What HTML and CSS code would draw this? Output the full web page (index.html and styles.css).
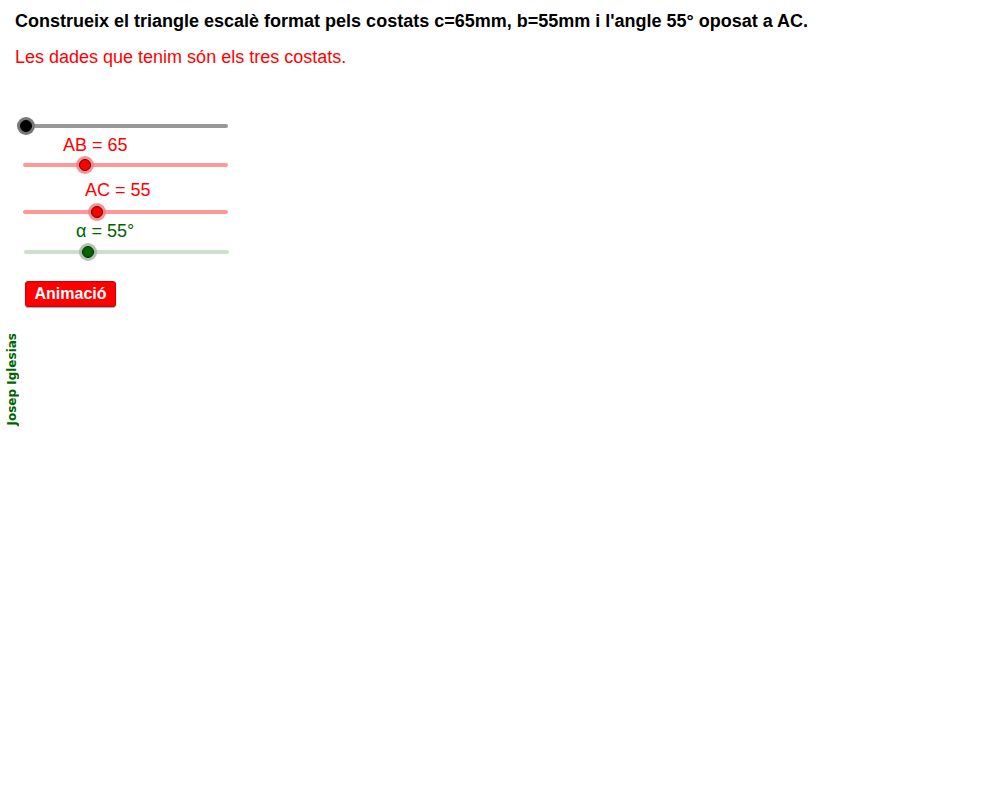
FILE: index.html
```html
<!DOCTYPE html>
<html>
<head>
<meta charset="utf-8">
<link rel="stylesheet" href="styles.css">
</head>
<body>
<div class="applet">
  <div class="title">Construeix el triangle escalè format pels costats c=65mm, b=55mm i l'angle 55° oposat a AC.</div>
  <div class="subtitle">Les dades que tenim són els tres costats.</div>

  <div class="sliders">
    <div class="track track-black t1"><span class="knob knob-black" style="left:0px"></span></div>
    <div class="label red l-ab">AB = 65</div>
    <div class="track track-red t2"><span class="knob knob-red" style="left:62px"></span></div>
    <div class="label red l-ac">AC = 55</div>
    <div class="track track-red t3"><span class="knob knob-red" style="left:74px"></span></div>
    <div class="label green l-alpha">α = 55°</div>
    <div class="track track-green t4"><span class="knob knob-green" style="left:64px"></span></div>
    <button class="anim">Animació</button>
    <div class="author">Josep Iglesias</div>
  </div>
</div>
</body>
</html>
```

FILE: styles.css
```css
html, body {
  margin: 0;
  padding: 0;
  background: #ffffff;
}
.applet {
  width: 1007px;
  height: 787px;
  font-family: "Liberation Sans", Arial, sans-serif;
}
.title {
  padding: 11px 0 0 15px;
  font-size: 18px;
  font-weight: bold;
  line-height: 20px;
  color: #000;
  white-space: nowrap;
}
.subtitle {
  margin-top: 16px;
  padding-left: 15px;
  font-size: 18px;
  line-height: 20px;
  color: #ff0000;
}
.sliders {
  display: flex;
  flex-direction: column;
  align-items: flex-start;
  padding-left: 23px;
}
.track {
  position: relative;
  height: 4px;
  border-radius: 2px;
  width: 205px;
}
.track-black { background: #999999; margin-left: 3px; width: 202px; }
.track-red { background: #ff9999; }
.track-green { background: #cce0cc; margin-left: 1px; }
.t1 { margin-top: 57px; }
.t2 { margin-top: 8px; }
.t3 { margin-top: 10px; }
.t4 { margin-top: 9px; }
.knob {
  position: absolute;
  top: 50%;
  width: 10px;
  height: 10px;
  border-radius: 50%;
  transform: translate(-50%, -50%);
}
.knob-black {
  background: #000;
  border: 1px solid #000;
  box-shadow: 0 0 0 3px #777777;
}
.knob-red {
  background: #ff0000;
  border: 1px solid #550000;
  box-shadow: 0 0 0 3px rgba(240, 120, 120, 0.8);
}
.knob-green {
  background: #006400;
  border: 1px solid #002a00;
  box-shadow: 0 0 0 3px rgba(150, 170, 150, 0.7);
}
.label {
  font-size: 18px;
  line-height: 20px;
  white-space: nowrap;
}
.red { color: #ff0000; }
.green { color: #006400; }
.l-ab { margin-top: 7px; margin-left: 40px; }
.l-ac { margin-top: 13px; margin-left: 62px; }
.l-alpha { margin-top: 7px; margin-left: 53px; }
.anim {
  margin-top: 27px;
  margin-left: 2px;
  width: 91px;
  height: 26px;
  padding: 0;
  background: #ff0000;
  color: #ffffff;
  border: 1px solid #cc0000;
  border-radius: 3px;
  font-family: "Liberation Sans", Arial, sans-serif;
  font-size: 16px;
  font-weight: bold;
  box-shadow: 0 1px 1px rgba(0,0,0,0.35);
}
.author {
  margin-top: 26px;
  margin-left: -17px;
  writing-mode: vertical-rl;
  transform: rotate(180deg);
  font-family: "DejaVu Sans", sans-serif;
  font-size: 12px;
  font-weight: bold;
  line-height: 13px;
  color: #006400;
}
```
